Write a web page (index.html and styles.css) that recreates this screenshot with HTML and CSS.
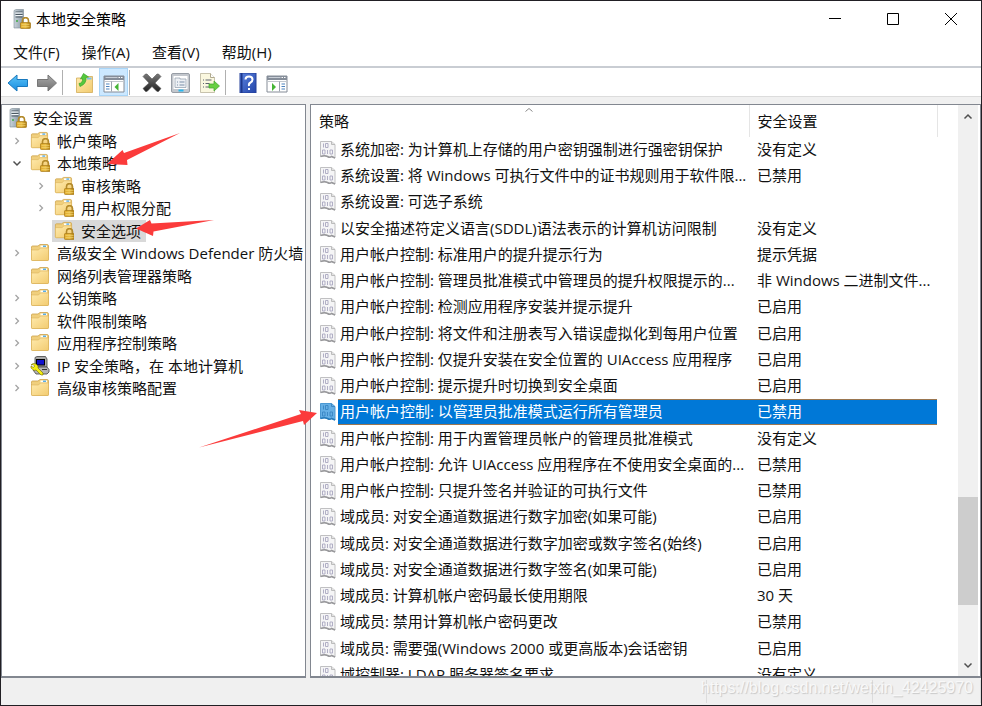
FILE: index.html
```html
<!DOCTYPE html>
<html lang="zh-CN">
<head>
<meta charset="utf-8">
<title>本地安全策略</title>
<link rel="stylesheet" href="styles.css">
</head>
<body>
<svg class="defs" aria-hidden="true">
  <defs>
    <linearGradient id="gFolder" x1="0" y1="0" x2="1" y2="1"><stop offset="0" stop-color="#ffebae"/><stop offset="1" stop-color="#f2cb70"/></linearGradient>
    <linearGradient id="gLock" x1="0" y1="0" x2="1" y2="0"><stop offset="0" stop-color="#dfa92a"/><stop offset=".5" stop-color="#e9bd45"/><stop offset="1" stop-color="#a9780f"/></linearGradient>
    <linearGradient id="gServer" x1="0" y1="0" x2="1" y2="0"><stop offset="0" stop-color="#c9d3da"/><stop offset="1" stop-color="#8797a3"/></linearGradient>
    <linearGradient id="gBlue" x1="0" y1="0" x2="0" y2="1"><stop offset="0" stop-color="#5cc4f7"/><stop offset="1" stop-color="#158be0"/></linearGradient>
    <linearGradient id="gGray" x1="0" y1="0" x2="0" y2="1"><stop offset="0" stop-color="#a9a9a9"/><stop offset="1" stop-color="#707070"/></linearGradient>
    <linearGradient id="gX" x1="0" y1="0" x2="0" y2="1"><stop offset="0" stop-color="#777"/><stop offset="1" stop-color="#222"/></linearGradient>
    <linearGradient id="gHelp" x1="0" y1="0" x2="1" y2="1"><stop offset="0" stop-color="#5b83df"/><stop offset="1" stop-color="#2344a8"/></linearGradient>
    <symbol id="lock" viewBox="0 0 11 12">
      <path d="M2.5 6V3.6a3 3 0 0 1 6 0V6" fill="none" stroke="#b38a2b" stroke-width="1.6"/>
      <rect x=".5" y="5.5" width="10" height="6" rx=".8" fill="url(#gLock)" stroke="#a87a17" stroke-width=".7"/>
      <path d="M1.5 7.5h8M1.5 9.5h8" stroke="#f4d775" stroke-width=".6"/>
    </symbol>
    <symbol id="folder" viewBox="0 0 20 20">
      <path d="M1.500 5.500V4Q1.500 3 2.500 3H8L10 1.500H17Q18.500 1.500 18.500 3V16.500Q18.500 17.500 17.500 17.500H2.500Q1.500 17.500 1.500 16.500Z" fill="#f0cf7d" stroke="#cda24a" stroke-width=".8"/>
      <path d="M10.500 2.500h6.500v2h-6.500z" fill="#fff"/><path d="M13 2.500h3v1.500h-3z" fill="#5aaee6"/>
      <path d="M1.500 7H8.500L10.500 5H18.500V16.500Q18.500 17.500 17.500 17.500H2.500Q1.500 17.500 1.500 16.500Z" fill="url(#gFolder)" stroke="#dcb35b" stroke-width=".6"/>
    </symbol>
    <symbol id="folderLock" viewBox="0 0 20 20"><use href="#folder" width="19" height="19"/><use href="#lock" x="10" y="7" width="11" height="12"/></symbol>
    <symbol id="server" viewBox="0 0 20 20">
      <path d="M1 1.500 3 .5h7.500V19H1z" fill="url(#gServer)" stroke="#7d8b96" stroke-width=".6"/>
      <path d="M2.500 3h7M2.500 5.500h7M2.500 8h7" stroke="#4c5962"/><path d="M2.500 4h7M2.500 6.500h7" stroke="#f4f8fa"/>
      <circle cx="4" cy="12" r="1" fill="#43ad45"/><use href="#lock" x="7" y="8" width="11" height="12"/>
    </symbol>
    <symbol id="ipsec" viewBox="0 0 20 20">
      <path d="M5 1.500 7 .5H15.500L17 3V11H5z" fill="#aaa" stroke="#444" stroke-width=".8"/>
      <path d="M6 3h9v6.500H6z" fill="#000"/><path d="M7 4h7v4.500H7z" fill="#1010d0"/>
      <path d="M3 14 6 11H17l2 2.500V16l-2 2H6z" fill="#b5b5b5" stroke="#444" stroke-width=".8"/><path d="M12 13.500h5" stroke="#333"/>
      <path d="M1 9 3 7.500l3 .5 2 2v2l5 5v2h-2l-5-5-2 .5-3-2.500V10l2.500 1.500L4.500 10 3 8.500z" fill="#f4ed12" stroke="#6e6a00" stroke-width=".6"/>
    </symbol>
    <symbol id="policy" viewBox="0 0 18 20">
      <path d="M1.500 1.500H12.500L16 4.500V18L12.500 16.500Q10.500 18 8 16.500T1.500 16.500Z" fill="#f5f5f6" stroke="#c0c0c2"/>
      <path d="M12.500 1.500v3H16" fill="#e2e2e2" stroke="#b0b0b0" stroke-width=".8"/>
      <path d="M1.500 16.500Q6 15 8.500 16.500T12.500 16.500L16 18" fill="none" stroke="#98989b" stroke-width="1.500"/>
      <g fill="none" stroke="#a9a7c0" stroke-width=".9"><path d="M4.500 3.500v4M6.500 3.500h2.500v4H6.500zM3.500 10h2.500v4H3.500zM8.500 10v4M11 10h2.500v4h-2.500z"/></g>
    </symbol>
    <symbol id="policySel" viewBox="0 0 18 20">
      <path d="M1.500 1.500H12.500L16 4.500V18L12.500 16.500Q10.500 18 8 16.500T1.500 16.500Z" fill="#65afe5" stroke="#4a98d3"/>
      <path d="M1.500 16.500Q6 15 8.500 16.500T12.500 16.500L16 18" fill="none" stroke="#267bbb" stroke-width="1.500"/>
      <g fill="none" stroke="#3885c2" stroke-width=".9"><path d="M4.500 3.500v4M6.500 3.500h2.500v4H6.500zM12.500 1.500v3H16M3.500 10h2.500v4H3.500zM8.500 10v4M11 10h2.500v4h-2.500z"/></g>
    </symbol>
    <symbol id="right" viewBox="0 0 10 10"><path d="M3.500 2 6.500 5 3.500 8" fill="none" stroke="#a3a3a3" stroke-width="1.300"/></symbol>
    <symbol id="down" viewBox="0 0 10 10"><path d="M1.500 3.500 5 7l3.500-3.500" fill="none" stroke="#505050" stroke-width="1.500"/></symbol>
    <symbol id="up" viewBox="0 0 10 10"><path d="M1.500 7.500 5 4 8.500 7.500" fill="none" stroke="#505050" stroke-width="1.500"/></symbol>
    <symbol id="pane" viewBox="0 0 22 20">
      <path d="M1 3h20v16H1z" fill="#fff" stroke="#858c97"/><path d="M1 3h20v4H1z" fill="#858d99"/>
      <path d="M2.500 4.500h12" stroke="#c8ced6"/><path d="M15.500 4.500h1.500M18 4.500h1.500" stroke="#fff"/><path d="M1.500 8.500h19" stroke="#c3c8ce"/>
    </symbol>
  </defs>
</svg>

<div class="window">
  <header class="titlebar">
    <svg class="app-icon"><use href="#server"/></svg>
    <h1>本地安全策略</h1>
    <button class="caption" aria-label="最小化"><svg viewBox="0 0 14 14"><path d="M1 6.500h12"/></svg></button>
    <button class="caption" aria-label="最大化"><svg viewBox="0 0 14 14"><path d="M1.500 1.500h11v11h-11z"/></svg></button>
    <button class="caption" aria-label="关闭"><svg viewBox="0 0 14 14"><path d="m1 1 12 12M13 1 1 13"/></svg></button>
  </header>

  <nav class="menubar">
    <button>文件(F)</button><button>操作(A)</button><button>查看(V)</button><button>帮助(H)</button>
  </nav>

  <div class="toolbar">
    <button aria-label="后退"><svg viewBox="0 0 22 20"><path d="M1 10 10 2v4.500h10.500v7H10V18z" fill="url(#gBlue)" stroke="#1878bd"/></svg></button>
    <button aria-label="前进"><svg viewBox="0 0 22 20"><path d="M20.500 10 12 2v4.500H1.500v7H12V18z" fill="url(#gGray)" stroke="#777"/></svg></button>
    <span class="sep"></span>
    <button aria-label="上一级"><svg viewBox="0 0 22 20"><path d="M2.500 5h5l1-1.500H18.500v16h-16z" fill="url(#gFolder)" stroke="#d3ac57" stroke-width=".8"/><path d="M13 4.500h4.500v2H13z" fill="#7fc0ea"/><path d="M5 10.500Q9 10 8.500 5.500L6.500 6 9.500.5 14.500 4l-2.500.5Q12.500 11 6 13.500z" fill="#54c83d" stroke="#38a32c" stroke-width=".7"/></svg></button>
    <button class="pressed" aria-label="显示/隐藏控制台树"><svg viewBox="0 0 22 20"><use href="#pane" width="22" height="20"/><path d="M8.500 8.500v10" stroke="#9aa2ac"/><path d="M3 11h3.500M3 13.500h3.500M3 16h3.500" stroke="#4d83bd"/><path d="m15.500 10-4 4 4 4z" fill="#45b536"/></svg></button>
    <span class="sep"></span>
    <button aria-label="删除"><svg viewBox="0 0 22 20"><path d="m2 3.500 2.500-2.500h1.500L11 6l5-5h1.500L20 3.500 14 10l6 5.500-2.500 3H16L11 13.500 6 18.500H4.500L2 15.500 8 10z" fill="url(#gX)" stroke="#555" stroke-width=".6"/></svg></button>
    <button aria-label="属性"><svg viewBox="0 0 22 20"><rect x="1.500" y=".5" width="18" height="19" rx="1.500" fill="#c3c7cd" stroke="#979da5"/><path d="M3.500 3h14v13h-14z" fill="#fff"/><path d="M5 7.500V5h5v1h6v8.500H5z" fill="#edf0f4" stroke="#9ba5b3" stroke-width=".8"/><path d="M7 9h1M9.500 9h5M7 12h1M9.500 12h5" stroke="#7b8fa8"/><path d="M8.500 17.500h5" stroke="#29b7ee" stroke-width="2"/></svg></button>
    <button aria-label="导出列表"><svg viewBox="0 0 22 20"><path d="M1.500 .5H11.500l4 4v15h-14z" fill="#faf7df" stroke="#b9b49c" stroke-width=".8"/><path d="M11.500 .5v4h4" fill="#fff" stroke="#b0aa8f"/><path d="M4 7h1M6.500 7H12.500M4 10.500h1M6.500 10.500h4M4 14h1M6.500 14h4" stroke="#5f6470"/><path d="M10 11h5V8l5.500 5-5.500 5v-3h-5z" fill="#67cf42" stroke="#40a32b" stroke-width=".7"/></svg></button>
    <span class="sep"></span>
    <button aria-label="帮助"><svg viewBox="0 0 22 20"><path d="M3 0h16v20H3z" fill="url(#gHelp)" stroke="#24419a"/><path d="M4 0h1.500v20H4z" fill="#1e388c"/><path d="M8.500 6.500Q8.500 3.500 12 3.500t3.500 3Q15.500 8.500 13.500 9.500T12 13" fill="none" stroke="#fff" stroke-width="2"/><path d="M11 15h2v2h-2z" fill="#fff"/></svg></button>
    <button aria-label="显示/隐藏操作窗格"><svg viewBox="0 0 22 20"><use href="#pane" width="22" height="20"/><path d="M13.500 8.500v10" stroke="#9aa2ac"/><path d="M15.500 11H19M15.500 13.500H19M15.500 16H19" stroke="#4d83bd"/><path d="m6 10 4 4-4 4z" fill="#45b536"/></svg></button>
  </div>

  <main class="panes">
    <ul class="tree">
      <li class="root"><svg class="node"><use href="#server"/></svg><span>安全设置</span></li>
      <li><svg class="twist"><use href="#right"/></svg><svg class="node"><use href="#folderLock"/></svg><span>帐户策略</span></li>
      <li><svg class="twist"><use href="#down"/></svg><svg class="node"><use href="#folderLock"/></svg><span>本地策略</span></li>
      <li class="child"><svg class="twist"><use href="#right"/></svg><svg class="node"><use href="#folderLock"/></svg><span>审核策略</span></li>
      <li class="child"><svg class="twist"><use href="#right"/></svg><svg class="node"><use href="#folderLock"/></svg><span>用户权限分配</span></li>
      <li class="child"><i class="twist"></i><div class="current"><svg class="node"><use href="#folderLock"/></svg><span>安全选项</span></div></li>
      <li><svg class="twist"><use href="#right"/></svg><svg class="node"><use href="#folder"/></svg><span>高级安全 Windows Defender 防火墙</span></li>
      <li><i class="twist"></i><svg class="node"><use href="#folder"/></svg><span>网络列表管理器策略</span></li>
      <li><svg class="twist"><use href="#right"/></svg><svg class="node"><use href="#folder"/></svg><span>公钥策略</span></li>
      <li><svg class="twist"><use href="#right"/></svg><svg class="node"><use href="#folder"/></svg><span>软件限制策略</span></li>
      <li><svg class="twist"><use href="#right"/></svg><svg class="node"><use href="#folder"/></svg><span>应用程序控制策略</span></li>
      <li><svg class="twist"><use href="#right"/></svg><svg class="node"><use href="#ipsec"/></svg><span>IP 安全策略，在 本地计算机</span></li>
      <li><svg class="twist"><use href="#right"/></svg><svg class="node"><use href="#folder"/></svg><span>高级审核策略配置</span></li>
    </ul>

    <section class="list">
      <div class="view">
        <table>
          <colgroup><col><col class="setting"><col class="rest"></colgroup>
          <thead><tr><th>策略<svg class="sort" viewBox="0 0 8 4"><path d="M.5 3.500 4 .5l3.500 3"/></svg></th><th>安全设置</th><td></td></tr></thead>
          <tbody>
            <tr><td><div><svg><use href="#policy"/></svg><span>系统加密: 为计算机上存储的用户密钥强制进行强密钥保护</span></div></td><td>没有定义</td></tr>
            <tr><td><div><svg><use href="#policy"/></svg><span>系统设置: 将 Windows 可执行文件中的证书规则用于软件限...</span></div></td><td>已禁用</td></tr>
            <tr><td><div><svg><use href="#policy"/></svg><span>系统设置: 可选子系统</span></div></td><td></td></tr>
            <tr><td><div><svg><use href="#policy"/></svg><span>以安全描述符定义语言(SDDL)语法表示的计算机访问限制</span></div></td><td>没有定义</td></tr>
            <tr><td><div><svg><use href="#policy"/></svg><span>用户帐户控制: 标准用户的提升提示行为</span></div></td><td>提示凭据</td></tr>
            <tr><td><div><svg><use href="#policy"/></svg><span>用户帐户控制: 管理员批准模式中管理员的提升权限提示的...</span></div></td><td>非 Windows 二进制文件...</td></tr>
            <tr><td><div><svg><use href="#policy"/></svg><span>用户帐户控制: 检测应用程序安装并提示提升</span></div></td><td>已启用</td></tr>
            <tr><td><div><svg><use href="#policy"/></svg><span>用户帐户控制: 将文件和注册表写入错误虚拟化到每用户位置</span></div></td><td>已启用</td></tr>
            <tr><td><div><svg><use href="#policy"/></svg><span>用户帐户控制: 仅提升安装在安全位置的 UIAccess 应用程序</span></div></td><td>已启用</td></tr>
            <tr><td><div><svg><use href="#policy"/></svg><span>用户帐户控制: 提示提升时切换到安全桌面</span></div></td><td>已启用</td></tr>
            <tr class="selected"><td><div><svg><use href="#policySel"/></svg><span>用户帐户控制: 以管理员批准模式运行所有管理员</span></div></td><td>已禁用</td></tr>
            <tr><td><div><svg><use href="#policy"/></svg><span>用户帐户控制: 用于内置管理员帐户的管理员批准模式</span></div></td><td>没有定义</td></tr>
            <tr><td><div><svg><use href="#policy"/></svg><span>用户帐户控制: 允许 UIAccess 应用程序在不使用安全桌面的...</span></div></td><td>已禁用</td></tr>
            <tr><td><div><svg><use href="#policy"/></svg><span>用户帐户控制: 只提升签名并验证的可执行文件</span></div></td><td>已禁用</td></tr>
            <tr><td><div><svg><use href="#policy"/></svg><span>域成员: 对安全通道数据进行数字加密(如果可能)</span></div></td><td>已启用</td></tr>
            <tr><td><div><svg><use href="#policy"/></svg><span>域成员: 对安全通道数据进行数字加密或数字签名(始终)</span></div></td><td>已启用</td></tr>
            <tr><td><div><svg><use href="#policy"/></svg><span>域成员: 对安全通道数据进行数字签名(如果可能)</span></div></td><td>已启用</td></tr>
            <tr><td><div><svg><use href="#policy"/></svg><span>域成员: 计算机帐户密码最长使用期限</span></div></td><td>30 天</td></tr>
            <tr><td><div><svg><use href="#policy"/></svg><span>域成员: 禁用计算机帐户密码更改</span></div></td><td>已禁用</td></tr>
            <tr><td><div><svg><use href="#policy"/></svg><span>域成员: 需要强(Windows 2000 或更高版本)会话密钥</span></div></td><td>已启用</td></tr>
            <tr><td><div><svg><use href="#policy"/></svg><span>域控制器: LDAP 服务器签名要求</span></div></td><td>没有定义</td></tr>
          </tbody>
        </table>
      </div>
      <div class="scrollbar">
        <button aria-label="向上滚动"><svg><use href="#up"/></svg></button>
        <div class="track"><div class="before"></div><div class="thumb"></div><div class="after"></div></div>
        <button aria-label="向下滚动"><svg><use href="#down"/></svg></button>
      </div>
    </section>
  </main>

  <footer class="statusbar"><span></span><span></span><span></span></footer>
  <div class="watermark">https://blog.csdn.net/weixin_42425970</div>
  <svg class="marks" viewBox="0 0 330 460" aria-hidden="true">
    <path d="M107 164 122.500 150 124 153 180 133 127 160 127.500 165z"/>
    <path d="M136 228.500 150 220 151.500 223.500 214 220 153.500 231.500 153 236z"/>
    <path d="M317 413 299 410 301 414 199 447.500 303 421 304 425z"/>
  </svg>
</div>
</body>
</html>
```
FILE: styles.css
```css
* { box-sizing: border-box; }

body {
  margin: 0;
  color: #111;
  font: 15px/22px "Open Sans", "Noto Sans CJK SC", sans-serif;
}

button {
  padding: 0;
  border: 0;
  background: transparent;
  color: inherit;
  font: inherit;
}

svg { display: block; flex: none; }

.defs { position: absolute; width: 0; height: 0; }

.window {
  position: relative;
  display: flex;
  flex-direction: column;
  height: 100vh;
  overflow: hidden;
  border: 1px solid #211f24;
  background: #fff;
}

.titlebar { display: flex; flex: none; align-items: center; height: 36px; padding: 0 1px 0 12px; }
.titlebar h1 { flex: 1; margin: 0; font-size: 15px; font-weight: 400; color: #000; }
.app-icon { width: 20px; height: 20px; margin-right: 3px; }
.caption { display: grid; place-items: center; width: 58px; height: 36px; }
.caption svg { width: 14px; height: 14px; fill: none; stroke: #000; }

.menubar {
  display: flex;
  flex: none;
  gap: 22px;
  height: 31px;
  padding-left: 12px;
  border-bottom: 2px solid #c9cdd3;
}

.toolbar {
  display: flex;
  flex: none;
  align-items: center;
  height: 29px;
  padding-left: 2px;
  border-bottom: 1px solid #dcdcdc;
}
.toolbar button { display: grid; place-items: center; width: 29px; height: 28px; padding-top: 1px; }
.toolbar svg { width: 22px; height: 20px; }
.toolbar .pressed { background: #cce8ff; box-shadow: inset 0 0 0 1px #a9d5f7; }
.sep { width: 1px; height: 25px; margin: 0 7px 0 1px; background: #b0b0b0; }

.panes {
  display: flex;
  flex: 1;
  gap: 4px;
  min-height: 0;
  padding-top: 7px;
  background: #f0f0f0;
}

.tree {
  display: grid;
  grid-template-rows: repeat(6, 22px 23px) 22px;
  width: 305px;
  margin: 0;
  padding: 2px 0 0 2px;
  overflow: hidden;
  border: 1px solid #828790;
  border-bottom-width: 2px;
  background: #fff;
  list-style: none;
  white-space: nowrap;
}
.tree li { display: flex; align-items: center; padding-left: 8px; }
.tree .root { padding-left: 5px; }
.tree .child { padding-left: 32px; }
.twist { flex: none; width: 10px; height: 10px; margin-right: 8px; }
.node { width: 20px; height: 20px; margin-right: 7px; }
.root .node { margin-right: 4px; }
.current { display: flex; align-items: center; margin-left: -2px; padding: 0 5px 0 2px; background: #d9d9d9; }

.list {
  display: flex;
  flex: 1;
  min-width: 0;
  padding-right: 2px;
  border: 1px solid #828790;
  border-bottom-width: 2px;
  background: #fff;
}
.view { flex: 1; min-width: 0; overflow: hidden; }

table { width: 100%; table-layout: fixed; border-collapse: collapse; white-space: nowrap; }
.setting { width: 188px; }
.rest { width: 21px; }
th, td { padding: 0; text-align: left; font-weight: 400; }
th { position: relative; height: 32px; padding-left: 8px; border-right: 1px solid #e5e5e5; }
.sort { position: absolute; top: 3px; left: 49%; width: 8px; height: 4px; fill: none; stroke: #8a8a8a; }
tbody tr { height: 26px; }
tbody tr:nth-child(4n) { height: 27px; }
tbody td + td { padding: 0 0 2px 8px; }
td div { display: flex; align-items: center; height: 26px; padding-left: 8px; }
td svg { width: 18px; height: 20px; }
td span { flex: 1; margin-left: 1px; padding: 0 0 2px 2px; line-height: 24px; }
.selected span, .selected td + td {
  background: #0078d7;
  color: #fff;
  box-shadow: inset 0 1px #9a7650, inset 0 -1px #9a7650;
}

.scrollbar { display: flex; flex-direction: column; width: 20px; background: #f0f0f0; }
.scrollbar button { display: grid; place-items: center; height: 22px; }
.scrollbar svg { width: 10px; height: 10px; }
.track { display: flex; flex: 1; flex-direction: column; }
.before { flex: 367; }
.thumb { flex: 107; background: #cdcdcd; }
.after { flex: 49; }

.statusbar { display: grid; flex: none; grid-template-columns: 1fr 166px 108px; height: 27px; padding: 2px 0; background: #f0f0f0; }
.statusbar span { border-right: 1px solid #dcdcdc; }

.watermark {
  position: absolute;
  right: 8px;
  bottom: 7px;
  color: #f8f8f8;
  font: 16px/20px "Liberation Sans", sans-serif;
  text-shadow: 1px 1px 1px #c8c8c8;
}

.marks { position: absolute; top: -1px; left: -1px; width: 330px; height: 460px; fill: #fb3b3b; pointer-events: none; }
```
